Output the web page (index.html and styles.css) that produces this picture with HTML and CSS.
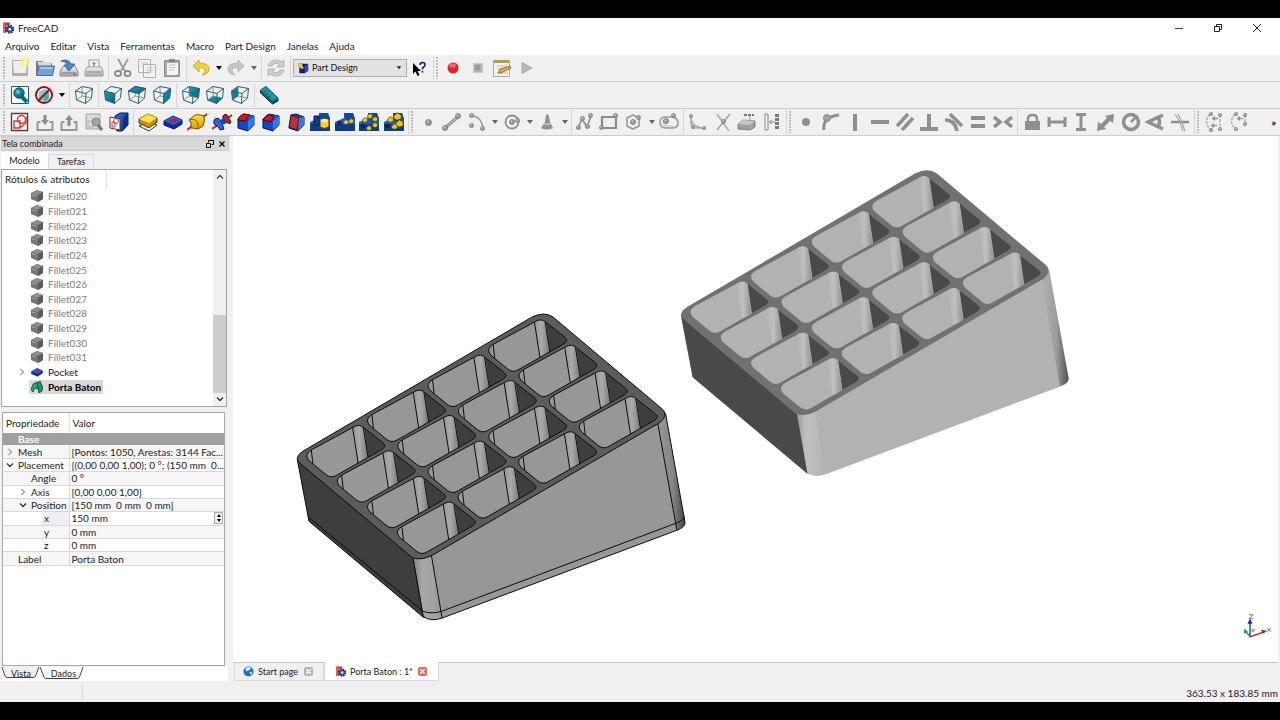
FILE: index.html
```html
<!DOCTYPE html>
<html lang="pt">
<head>
<meta charset="utf-8">
<title>FreeCAD</title>
<link rel="stylesheet" href="styles.css">
</head>
<body>
<svg class="sprite" aria-hidden="true">
  <defs>
    <linearGradient id="teal" x1="0" y1="0" x2="1" y2="1"><stop offset="0" stop-color="#16a3b5"/><stop offset="1" stop-color="#0a5f7c"/></linearGradient>
    <linearGradient id="gold" x1="0" y1="0" x2="0" y2="1"><stop offset="0" stop-color="#ffe13c"/><stop offset="1" stop-color="#d79a06"/></linearGradient>
    <linearGradient id="steel" x1="0" y1="0" x2="0" y2="1"><stop offset="0" stop-color="#f4f4f4"/><stop offset="1" stop-color="#a8a8a8"/></linearGradient>
    <linearGradient id="blueface" x1="0" y1="0" x2="1" y2="1"><stop offset="0" stop-color="#2b6fe0"/><stop offset="1" stop-color="#0a2f9c"/></linearGradient>
    <linearGradient id="roundv" x1="0" y1="0" x2="1" y2="0"><stop offset="0" stop-color="#000" stop-opacity=".1"/><stop offset=".3" stop-color="#fff" stop-opacity=".16"/><stop offset=".65" stop-color="#fff" stop-opacity=".12"/><stop offset="1" stop-color="#fff" stop-opacity="0"/></linearGradient>
    <linearGradient id="roundr" x1="0" y1="0" x2="1" y2="0"><stop offset="0" stop-color="#000" stop-opacity="0"/><stop offset=".55" stop-color="#000" stop-opacity=".12"/><stop offset="1" stop-color="#000" stop-opacity=".55"/></linearGradient>
    <linearGradient id="roundc" x1="0" y1="0" x2="1" y2="0"><stop offset="0" stop-color="#fff" stop-opacity="0"/><stop offset=".45" stop-color="#fff" stop-opacity=".18"/><stop offset="1" stop-color="#000" stop-opacity=".22"/></linearGradient>
    <clipPath id="opening"><path d="M66 449L190 382Q209 370 223 384L279 428Q292 438 277 448L142 525Q124 537 108 524L58 483Q40 463 66 449Z"/></clipPath>
  </defs>

  <symbol id="i-app" viewBox="0 0 20 20"><path d="M2 1h11v4H7v3h4v4H7v6H2z" fill="#d8301c"/><path d="M2 1h3v17H2z" fill="#f0634a"/><circle cx="13" cy="12" r="5" fill="none" stroke="#16327f" stroke-width="5" stroke-dasharray="2.6 1.3"/><circle cx="13" cy="12" r="4" fill="#dce6fa" stroke="#2145a2" stroke-width="3"/></symbol>
  <symbol id="i-new" viewBox="0 0 20 20"><path d="M2.500 2.500h15v15h-15z" fill="url(#steel)" stroke="#b0b0a0"/><path d="M4 4h12v11H4z" fill="#efefea"/><circle cx="15" cy="4" r="4.500" fill="#f8f05a" opacity=".75"/><circle cx="15" cy="4" r="2" fill="#fffde0"/></symbol>
  <symbol id="i-open" viewBox="0 0 20 20"><path d="M1 3h7l1 2h8v6H1z" fill="#8b8b8b"/><path d="M3 4h13v8H3z" fill="#d7d7d7"/><path d="M1 3v14h1l2-9z" fill="#777"/><path d="M4 8h15.500l-2 9.500H1.500z" fill="#74a0d4" stroke="#3f6fae"/><path d="M5 9h13l-.6 2H4.600z" fill="#a6c5e8"/></symbol>
  <symbol id="i-save" viewBox="0 0 20 20"><path d="M4 8h12l3 6v4H1v-4z" fill="url(#steel)" stroke="#8a8a8a"/><path d="M3 15h14M14 16.500h3" stroke="#777"/><path d="M2 3Q9 0 12 6h4l-6 7-5-6h3Q7 3 2 3z" fill="#4f86c6" stroke="#2a5a9a" stroke-width=".8"/></symbol>
  <symbol id="i-print" viewBox="0 0 20 20"><path d="M5 2h10v8H5z" fill="#f5f5f5" stroke="#9a9a9a"/><path d="M3 9h14l2 4v5H1v-5z" fill="url(#steel)" stroke="#9a9a9a"/><path d="M3 14h14" stroke="#888"/><path d="M9 8.500V6H7.500L10 3.500 12.500 6H11v2.500z" fill="#9a9a9a"/></symbol>
  <symbol id="i-cut" viewBox="0 0 20 20"><path d="M5 1l7 12M15 1L8 13" stroke="#9b9b9b" stroke-width="1.800" fill="none"/><ellipse cx="5" cy="15.500" rx="3" ry="2.700" fill="none" stroke="#868686" stroke-width="1.800"/><ellipse cx="14.500" cy="15.500" rx="3" ry="2.700" fill="none" stroke="#868686" stroke-width="1.800"/></symbol>
  <symbol id="i-copy" viewBox="0 0 20 20"><g fill="#f2f2f2" stroke="#b0b0b0"><path d="M1.500 1.500h12v13h-12zM6.500 6.500h12v13h-12z"/></g><path d="M4 5h7M4 8h3M9 10h7M9 12.500h7M9 15h5" stroke="#c6c6c6"/></symbol>
  <symbol id="i-paste" viewBox="0 0 20 20"><path d="M2.500 2.500h15v16h-15z" fill="#a9a9a9" stroke="#8d8d8d"/><path d="M5 5h11v11l-2 1H5z" fill="#f4f4f4"/><path d="M7 1h6v3H7z" fill="#888"/><path d="M7 7h7M7 9.500h7M7 12h5" stroke="#c2c2c2"/></symbol>
  <symbol id="i-undo" viewBox="0 0 20 20"><path d="M8 2L2 8l6 6v-4q6-1 6 3 0 2-3 4 7-1 7-6 0-6-10-6z" fill="#efd23a" stroke="#c4a018" stroke-width=".8"/></symbol>
  <symbol id="i-redo" viewBox="0 0 20 20"><path d="M12 2l6 6-6 6v-4q-6-1-6 3 0 2 3 4-7-1-7-6 0-6 10-6z" fill="#c6c6c6" stroke="#b0b0b0" stroke-width=".8"/></symbol>
  <symbol id="i-refresh" viewBox="0 0 20 20"><path d="M2 8Q4 2 10 2q4 0 5.500 2L18 2v7h-7l2.500-2.500Q9 3.500 6 8zM18 12q-2 6-8 6-4 0-5.500-2L2 18v-7h7l-2.500 2.500Q11 16.500 14 12z" fill="#cdcdcd" stroke="#a9a9a9" stroke-width=".8"/></symbol>
  <symbol id="i-part" viewBox="0 0 20 20"><path d="M3 5l5-3h10v12l-6 4H3z" fill="#101c9a" stroke="#000640"/><path d="M12 6l6-4v12l-6 4z" fill="#2a43d8"/><path d="M1 1h7v5l3 3-4 2-6-4z" fill="#f4d52a" stroke="#6b5a00" stroke-width=".6"/></symbol>
  <symbol id="i-what" viewBox="0 0 20 20"><path d="M4 5v11l2.500-2.500L8.500 18l2-1-2-4H12z" fill="#000"/><path d="M11 7q0-2.500 2.500-2.500T16 6.700q0 1.500-2.500 3.300v1.500M13.500 13v1.600" fill="none" stroke="#12127a" stroke-width="1.500"/></symbol>
  <symbol id="i-rec" viewBox="0 0 20 20"><circle cx="10" cy="10" r="5.500" fill="#e0252b"/><ellipse cx="9.500" cy="7.500" rx="3.500" ry="2" fill="#f26a6c"/></symbol>
  <symbol id="i-stop" viewBox="0 0 20 20"><path d="M5.500 5.500h9v9h-9z" fill="#b4b4b4" stroke="#c9c9c9"/><path d="M7 7h5v5H7z" fill="#9c9c9c"/></symbol>
  <symbol id="i-macro" viewBox="0 0 20 20"><path d="M1.500 2.500h16v16h-16z" fill="#f5f3ea" stroke="#aaa"/><path d="M2 2h15v3H2z" fill="#b4a04c"/><path d="M5 8h10M5 11h6M5 15h11" stroke="#bcbcbc"/><path d="M6 15l2-4L18 8l1 2-10 5z" fill="#e5a340" stroke="#865017" stroke-width=".7"/></symbol>
  <symbol id="i-play" viewBox="0 0 20 20"><path d="M5 4.500v11l10-5.500z" fill="#b8b8b8" stroke="#a8a8a8"/></symbol>
  <symbol id="i-drop" viewBox="0 0 8 5"><path d="M1 0h6L4 4z" fill="currentColor"/></symbol>

  <symbol id="i-fit" viewBox="0 0 20 20"><path d="M1.500 1.500h17v17h-17z" fill="#fff" stroke="#1b5e72"/><path d="M12 12l5 5" stroke="#0c6a80" stroke-width="4"/><circle cx="9" cy="8" r="5.200" fill="url(#teal)" stroke="#084e60"/><circle cx="8" cy="7" r="2" fill="#5fc6d2"/></symbol>
  <symbol id="i-draw" viewBox="0 0 20 20"><path d="M5 7l6-3 4 3v7l-5 3-5-2z" fill="#66d2d4"/><path d="M10 9l5-2v7l-5 3z" fill="#3db0b8"/><circle cx="10" cy="10" r="8" fill="none" stroke="#a80f12" stroke-width="2"/><path d="M16 4L4 16" stroke="#a80f12" stroke-width="2"/></symbol>
  <symbol id="wire" viewBox="0 0 20 20"><path d="M1.500 6L8 1.500l10.500 2L12 8.500zM1.500 6L2.500 15l9 3.500.5-10M11.500 18.500L17.500 13l1-9.500" fill="none" stroke="#2d5e68"/><path d="M8 1.500l.2 9.500 9.300 2M8.200 11L2.500 15" fill="none" stroke="#5c8790" stroke-width=".8"/></symbol>
  <symbol id="i-front" viewBox="0 0 20 20"><path d="M1.500 6L12 8.500l-.5 10-9-3.500z" fill="url(#teal)"/><path d="M1.500 6L8 1.500l10.500 2L12 8.500zM1.500 6L2.500 15l9 3.500.5-10M11.500 18.500L17.500 13l1-9.500" fill="none" stroke="#2d5e68"/></symbol>
  <symbol id="i-top" viewBox="0 0 20 20"><use href="#wire" width="20" height="20"/><path d="M1.500 6L8 1.500l10.500 2L12 8.500z" fill="url(#teal)" stroke="#2d5e68"/></symbol>
  <symbol id="i-right" viewBox="0 0 20 20"><use href="#wire" width="20" height="20"/><path d="M12 8.500l6.500-5-1 9.500-6 5.500z" fill="url(#teal)" stroke="#2d5e68"/></symbol>
  <symbol id="i-rear" viewBox="0 0 20 20"><path d="M8 1.500l10.500 2-1 9.500-9.300-2z" fill="url(#teal)"/><use href="#wire" width="20" height="20"/></symbol>
  <symbol id="i-bottom" viewBox="0 0 20 20"><path d="M8.200 11l9.300 2-6 5.500-9-3.500z" fill="url(#teal)"/><use href="#wire" width="20" height="20"/></symbol>
  <symbol id="i-left" viewBox="0 0 20 20"><path d="M1.500 6L8 1.500l.2 9.500-5.700 4z" fill="url(#teal)"/><use href="#wire" width="20" height="20"/></symbol>
  <symbol id="i-measure" viewBox="0 0 20 20"><path d="M1.500 5L7 1.500 19 13v3l-5.500 3L1.500 8z" fill="#0e5a68" stroke="#06343c"/><path d="M1.500 5L7 1.500 19 13l-5.500 3z" fill="#2593a0"/><path d="M4.500 7l2-1M7 9.500l2-1M9.500 12l2-1" stroke="#043038"/></symbol>

  <symbol id="i-sketch" viewBox="0 0 20 20"><path d="M1.500 1.500h16v17h-16z" fill="#fff" stroke="#5b3b3b" stroke-width="1.400"/><g fill="none" stroke="#d43a36" stroke-width="1.400"><circle cx="11.500" cy="7.500" r="4"/><path d="M4 9h6v7H4zM10 16l6-5v-6"/></g></symbol>
  <symbol id="i-import" viewBox="0 0 20 20"><path d="M2.500 10v8h15v-8h-3M2.500 10h3" fill="none" stroke="#979797" stroke-width="2"/><path d="M8.500 3h3v5H14l-4 5-4-5h2.500z" fill="#8c8c8c"/></symbol>
  <symbol id="i-export" viewBox="0 0 20 20"><path d="M2.500 10v8h15v-8h-3M2.500 10h3" fill="none" stroke="#979797" stroke-width="2"/><path d="M8.500 14h3V8H14l-4-5-4 5h2.500z" fill="#8c8c8c"/></symbol>
  <symbol id="i-viewsk" viewBox="0 0 20 20"><path d="M2 2h14v15H2z" fill="#dadada" stroke="#a3a3a3"/><path d="M4 9h5v6H4zM9 15l4-4V5" fill="none" stroke="#b0b0b0"/><path d="M14 13l4 5" stroke="#777" stroke-width="3"/><circle cx="12" cy="10" r="4" fill="#a5a5a5" stroke="#808080"/></symbol>
  <symbol id="i-mapsk" viewBox="0 0 20 20"><path d="M6 4l5-3h8v12l-6 6H8z" fill="url(#blueface)" stroke="#061c50"/><path d="M14 6l5-5v12l-5 6z" fill="#0a2c86"/><path d="M1 5l10 2v11L1 16z" fill="#fff" stroke="#7d2b2b"/><g fill="none" stroke="#d43a36"><circle cx="7" cy="9" r="2.400"/><path d="M3 10h3v5H3z"/></g></symbol>
  <symbol id="i-pad" viewBox="0 0 20 20"><path d="M1 14l9-4 9 3-8 6z" fill="#fff" stroke="#333"/><path d="M1 7l9-5 9 4v4l-8 6-10-5z" fill="#c58f08" stroke="#4d3900"/><path d="M1 7l9-5 9 4-8 5z" fill="#ffe04a"/></symbol>
  <symbol id="i-pocket" viewBox="0 0 20 20"><path d="M1 9l9-5 9 4v4l-8 5-10-4z" fill="#0d2f9c" stroke="#04144a"/><path d="M1 9l9-5 9 4-8 5z" fill="#2a60dc"/><path d="M6 9l4-2.500 5 1.800-4 2.700z" fill="#d5141c"/></symbol>
  <symbol id="i-rev" viewBox="0 0 20 20"><path d="M0 18L20 2" stroke="#e01c14" stroke-width="2"/><path d="M2 8l6-5q2-1 9 1 1 6-1 10l-5 3q-5-1-7-1Q5 10 2 8z" fill="url(#gold)" stroke="#6a4b00"/><path d="M2 8q7-2 9 3v6" fill="none" stroke="#8a6400"/></symbol>
  <symbol id="i-groove" viewBox="0 0 20 20"><path d="M0 17L20 3" stroke="#e01c14" stroke-width="2"/><path d="M2 8q4-4 7 1l3 8-4 1q-1-4-6-6z" fill="#2a64d8" stroke="#06205e"/><path d="M11 4q2-3 4-1l4 7q-1 3-3 1l-5-3z" fill="#c21e2a" stroke="#500"/><path d="M8 8l5-2 2 5-5 2z" fill="#1848b4"/></symbol>
  <symbol id="cube" viewBox="0 0 20 20"><path d="M2 7l6-5 10 2v9l-6 6-10-3z" fill="#1647c4" stroke="#05154e"/><path d="M12 9l6-5v9l-6 6z" fill="#2f7ae6"/><path d="M2 7l6-5 10 2-6 5z" fill="#1b58c8"/></symbol>
  <symbol id="i-fillet" viewBox="0 0 20 20"><use href="#cube" width="20" height="20"/><path d="M2 8q0-3 5-6l7 1q-4 2-4 6z" fill="#d8151e" stroke="#4c0008"/></symbol>
  <symbol id="i-chamfer" viewBox="0 0 20 20"><use href="#cube" width="20" height="20"/><path d="M2 8l4-5 7 1-3 6z" fill="#d8151e" stroke="#4c0008"/></symbol>
  <symbol id="i-draft" viewBox="0 0 20 20"><path d="M5 3l5-1 8 3v8l-6 6-9-3z" fill="#1648b8" stroke="#05154e"/><path d="M5 3l8 3-2 12-8-3z" fill="#b8303c" stroke="#560a14"/><path d="M13 6l5-1v8l-6 6z" fill="#2f7ae6"/></symbol>
  <symbol id="base" viewBox="0 0 20 20"><path d="M0 10l9-4V1l9 0 2 6v12H0z" fill="#1a5fb4"/><path d="M0 12h20v7H0z" fill="#0b3c86"/><path d="M9 1l9 0 2 6-8 4z" fill="#114a9c"/></symbol>
  <symbol id="yb" viewBox="0 0 6 6"><path d="M.5 2.500L3 .5l2.500 1.500v2.500L3 5.500.5 4.500z" fill="#e8c32a" stroke="#4a3a00" stroke-width=".6"/></symbol>
  <symbol id="i-mirror" viewBox="0 0 20 20"><use href="#base" width="20" height="20"/><path d="M4 4h5v9H4z" fill="#0c3e98" stroke="#041c50"/><path d="M10 9q4-4 9 0v6q-5 3-9 0z" fill="#f0d030" stroke="#4a3a00"/><ellipse cx="14.500" cy="8.500" rx="4" ry="1.800" fill="#fff07a"/></symbol>
  <symbol id="i-linear" viewBox="0 0 20 20"><use href="#base" width="20" height="20"/><use href="#yb" x="8" y="7" width="6" height="6"/><use href="#yb" x="13" y="6" width="6" height="6"/><path d="M2 9h5v4H2z" fill="#0a2f7c"/></symbol>
  <symbol id="i-polar" viewBox="0 0 20 20"><use href="#base" width="20" height="20"/><use href="#yb" x="8" y="1" width="6" height="6"/><use href="#yb" x="13" y="4" width="6" height="6"/><use href="#yb" x="13" y="10" width="6" height="6"/><use href="#yb" x="7" y="13" width="6" height="6"/><use href="#yb" x="3" y="5" width="6" height="6"/><path d="M2 12h4v4H2z" fill="#06225e"/></symbol>
  <symbol id="i-multi" viewBox="0 0 20 20"><use href="#base" width="20" height="20"/><use href="#yb" x="9" y="0" width="9" height="9"/><use href="#yb" x="11" y="7" width="9" height="9"/><use href="#yb" x="3" y="4" width="7" height="7"/><use href="#yb" x="7" y="11" width="7" height="7"/><path d="M1 12h5v4H1z" fill="#06225e"/></symbol>

  <symbol id="dot" viewBox="0 0 6 6"><circle cx="3" cy="3" r="2.500" fill="#9c9c9c" stroke="#747474" stroke-width=".8"/><circle cx="2.400" cy="2.200" r=".9" fill="#cfcfcf"/></symbol>
  <symbol id="i-point" viewBox="0 0 20 20"><use href="#dot" x="7" y="7" width="7" height="7"/></symbol>
  <symbol id="i-line" viewBox="0 0 20 20"><path d="M3 16L17 4" stroke="#8c8c8c" stroke-width="3"/><path d="M3 16L17 4" stroke="#d0d0d0"/><use href="#dot" x="0" y="13" width="6" height="6"/><use href="#dot" x="13" y="1" width="6" height="6"/></symbol>
  <symbol id="i-arc" viewBox="0 0 20 20"><path d="M5 4q9 0 11 12" fill="none" stroke="#999" stroke-width="1.500"/><use href="#dot" x="2" y="1" width="5" height="5"/><use href="#dot" x="2" y="11" width="5" height="5"/><use href="#dot" x="13" y="14" width="5" height="5"/></symbol>
  <symbol id="i-circle" viewBox="0 0 20 20"><circle cx="10" cy="10" r="6.500" fill="none" stroke="#909090" stroke-width="1.800"/><use href="#dot" x="7" y="7" width="6" height="6"/><use href="#dot" x="13" y="6" width="5" height="5"/></symbol>
  <symbol id="i-cone" viewBox="0 0 20 20"><path d="M9 3q2-2 3 1l1 6 3 6q-6 3-12 0l4-6z" fill="#929292"/><path d="M5 11q5 3 10 0" fill="none" stroke="#e4e4e4"/></symbol>
  <symbol id="i-poly" viewBox="0 0 20 20"><path d="M3 16l4-9 5 8 4-11" fill="none" stroke="#949494" stroke-width="1.800"/><use href="#dot" x="1" y="13" width="5" height="5"/><use href="#dot" x="5" y="4" width="5" height="5"/><use href="#dot" x="10" y="12" width="5" height="5"/><use href="#dot" x="13" y="1" width="5" height="5"/></symbol>
  <symbol id="i-rect" viewBox="0 0 20 20"><path d="M3 5h14v11H3z" fill="none" stroke="#8c8c8c" stroke-width="2.200"/><use href="#dot" x="0" y="13" width="5" height="5"/><use href="#dot" x="14" y="1" width="5" height="5"/></symbol>
  <symbol id="i-hex" viewBox="0 0 20 20"><path d="M9 3l6 3v8l-6 3-6-3V6z" fill="none" stroke="#999" stroke-width="1.600"/><use href="#dot" x="6" y="7" width="6" height="6"/><use href="#dot" x="12" y="3" width="5" height="5"/></symbol>
  <symbol id="i-slot" viewBox="0 0 20 20"><path d="M7 5h6q6 1 6 6 0 5-6 5H7q-6 0-6-6 0-5 6-5z" fill="none" stroke="#999" stroke-width="1.600"/><path d="M7 7q-3 0-3 3 0 4 4 4h6" fill="none" stroke="#bbb"/><use href="#dot" x="4" y="6" width="6" height="6"/><use href="#dot" x="12" y="1" width="5" height="5"/></symbol>
  <symbol id="i-sfillet" viewBox="0 0 20 20"><path d="M3 3v9q1 4 5 4h9M3 5q0 10 13 11" fill="none" stroke="#aaa" stroke-width="1.500"/><use href="#dot" x="1" y="2" width="4" height="4"/><use href="#dot" x="3" y="13" width="4" height="4"/><use href="#dot" x="14" y="14" width="4" height="4"/></symbol>
  <symbol id="i-trim" viewBox="0 0 20 20"><path d="M4 2l12 17M17 2L4 18" stroke="#a2a2a2" stroke-width="1.500"/><path d="M4 2l12 17" stroke="#c9c9c9" stroke-width=".6"/><use href="#dot" x="8" y="7" width="5" height="5"/></symbol>
  <symbol id="i-ext" viewBox="0 0 20 20"><path d="M1 12l5-4 12 1v6l-5 3-12-1z" fill="#a0a0a0" stroke="#808080"/><path d="M1 12l5-4 12 1-5 4z" fill="#c6c6c6"/><path d="M7 3h10" stroke="#777" stroke-width="2" stroke-dasharray="3 1"/><path d="M13 4v4" stroke="#999"/></symbol>
  <symbol id="i-carbon" viewBox="0 0 20 20"><path d="M3 2h3v16H3z" fill="#f4f4f4" stroke="#888"/><path d="M15 2v16" stroke="#7b7b7b" stroke-width="4" stroke-dasharray="3 1"/><path d="M7 10h6M9 8v4" stroke="#888"/></symbol>

  <symbol id="i-c1" viewBox="0 0 20 20"><circle cx="10" cy="10" r="4" fill="#8f8f8f"/></symbol>
  <symbol id="i-c2" viewBox="0 0 20 20"><path d="M3 18Q1 5 18 3" fill="none" stroke="#8f8f8f" stroke-width="3"/><circle cx="6" cy="6" r="3.500" fill="#a4a4a4" stroke="#868686"/></symbol>
  <symbol id="i-c3" viewBox="0 0 20 20"><path d="M10 2v17" stroke="#8f8f8f" stroke-width="4"/></symbol>
  <symbol id="i-c4" viewBox="0 0 20 20"><path d="M1 10h18" stroke="#8f8f8f" stroke-width="4"/></symbol>
  <symbol id="i-c5" viewBox="0 0 20 20"><path d="M2 14L13 2M7 18L18 6" stroke="#8f8f8f" stroke-width="3.500"/></symbol>
  <symbol id="i-c6" viewBox="0 0 20 20"><path d="M10 2v15M1 17h18" stroke="#8f8f8f" stroke-width="4"/></symbol>
  <symbol id="i-c7" viewBox="0 0 20 20"><path d="M6 2l12 12M1 8q10 0 12 11" fill="none" stroke="#8f8f8f" stroke-width="3.500"/></symbol>
  <symbol id="i-c8" viewBox="0 0 20 20"><path d="M3 6h14M3 14h14" stroke="#8f8f8f" stroke-width="4"/></symbol>
  <symbol id="i-c9" viewBox="0 0 20 20"><path d="M1 5l6 5-6 5M19 5l-6 5 6 5" fill="none" stroke="#8f8f8f" stroke-width="3.500"/></symbol>
  <symbol id="i-lock" viewBox="0 0 20 20"><path d="M3 9h15v9H3z" fill="#8f8f8f"/><path d="M6 10V7q0-4 4.500-4T15 7v3" fill="none" stroke="#8f8f8f" stroke-width="2.500"/></symbol>
  <symbol id="i-hd" viewBox="0 0 20 20"><path d="M2 5v10M18 5v10M2 10h16" stroke="#8f8f8f" stroke-width="3"/></symbol>
  <symbol id="i-vd" viewBox="0 0 20 20"><path d="M5 2.500h10M5 17.500h10M10 2v16" stroke="#8f8f8f" stroke-width="3"/></symbol>
  <symbol id="i-len" viewBox="0 0 20 20"><path d="M1 19l1-9 3 2 6-6-2-2 9-2-1 9-3-2-6 6 2 2z" fill="#8f8f8f"/></symbol>
  <symbol id="i-rad" viewBox="0 0 20 20"><circle cx="10" cy="10" r="7.500" fill="none" stroke="#8f8f8f" stroke-width="3.500"/><path d="M10 10l5-5" stroke="#8f8f8f" stroke-width="2.500"/></symbol>
  <symbol id="i-ang" viewBox="0 0 20 20"><path d="M18 3L3 10l15 7M13 5q3 5 0 10" fill="none" stroke="#8f8f8f" stroke-width="3.500"/></symbol>
  <symbol id="i-snell" viewBox="0 0 20 20"><path d="M1 10h18" stroke="#8f8f8f" stroke-width="2.500"/><path d="M5 2l5 8 3 9M8 2l4 8 3 9" fill="none" stroke="#a8a8a8" stroke-width="1.200"/></symbol>
  <symbol id="i-sel" viewBox="0 0 20 20"><path d="M6 2Q-1 10 6 17M16 3v13" fill="none" stroke="#a8a8a8" stroke-width="1.300" stroke-dasharray="3 1"/><path d="M14 6.500H9M13 13.500H8" stroke="#909090" stroke-width="1.300"/><path d="M11 4L7.500 6.500 11 9zM10 11l-3.500 2.500L10 16z" fill="#909090"/><use href="#dot" x="5" y="0" width="4" height="4"/><use href="#dot" x="14" y="1" width="4" height="4"/><use href="#dot" x="14" y="15" width="4" height="4"/><use href="#dot" x="5" y="16" width="4" height="4"/></symbol>
  <symbol id="i-sel2" viewBox="0 0 20 20"><path d="M6 2Q-1 10 6 16M16 3v9" fill="none" stroke="#a8a8a8" stroke-width="1.300" stroke-dasharray="3 1"/><path d="M14 6.500H9" stroke="#909090" stroke-width="1.300"/><path d="M11 4L7.500 6.500 11 9z" fill="#909090"/><use href="#dot" x="5" y="0" width="4" height="4"/><use href="#dot" x="14" y="1" width="4" height="4"/><use href="#dot" x="14" y="10" width="4" height="4"/><use href="#dot" x="5" y="15" width="4" height="4"/></symbol>

  <symbol id="i-gray" viewBox="0 0 12 12"><path d="M0 3l6-3 6 2v7l-5 3-7-3z" fill="#747474"/><path d="M0 3l6-3 6 2-5 3z" fill="#8d8d8d"/><path d="M1 5l4 1" stroke="#aaa"/><path d="M7 5l5-3v7l-5 3z" fill="#5c5c5c"/></symbol>
  <symbol id="i-mesh" viewBox="0 0 12 12"><path d="M0 9l2-6 4-2 1 7-3-1-2 4z" fill="#27a95c" stroke="#0b5030" stroke-width=".8"/><path d="M6 2l3-2 3 7-1 3-3 2z" fill="#1d8f72" stroke="#0b4038" stroke-width=".8"/></symbol>
  <symbol id="i-close" viewBox="0 0 10 10"><path d="M2.500 2.500l5 5M7.500 2.500l-5 5" stroke="currentColor" stroke-width="1.300"/></symbol>
  <symbol id="i-float" viewBox="0 0 10 10"><path d="M3.500 3.500v-2h5v4h-2M1.500 4.500h4v4h-4z" fill="none" stroke="#000"/></symbol>
  <symbol id="i-rt" viewBox="0 0 8 8"><path d="M2.500 1l3 3-3 3" fill="none" stroke="#999" stroke-width="1.200"/></symbol>
  <symbol id="i-dn" viewBox="0 0 8 8"><path d="M1 2.500l3 3 3-3" fill="none" stroke="#333" stroke-width="1.300"/></symbol>
  <symbol id="i-up" viewBox="0 0 8 8"><path d="M1 5.500l3-3 3 3" fill="none" stroke="#444" stroke-width="1.300"/></symbol>
  <symbol id="i-globe" viewBox="0 0 12 12"><circle cx="6" cy="6" r="5.500" fill="#1f6fc4"/><path d="M3 2q5-2 6 1l-3 2-3 1zM7 7l3-1-1 4z" fill="#d8ecfc"/></symbol>

  <symbol id="cell" overflow="visible">
    <g clip-path="url(#opening)">
      <path class="m-light" d="M40 360h260v180H40z"/>
      <path class="m-dark" d="M219 360h90v180h-64z"/>
      <path class="m-light" d="M187 370h31l17 115h-30z"/>
      <path d="M187 370h31l17 115h-30z" fill="url(#roundc)"/>
      <path class="m-line" d="M187 375l18 115M219 375l16 100M63 440l6 52"/>
    </g>
    <path class="m-line" d="M66 449L190 382Q209 370 223 384L279 428Q292 438 277 448L142 525Q124 537 108 524L58 483Q40 463 66 449Z"/>
  </symbol>
  <symbol id="cells" overflow="visible">
    <use href="#cell"/><use href="#cell" x="182" y="-106"/><use href="#cell" x="364" y="-211"/><use href="#cell" x="546" y="-317"/>
  </symbol>
  <symbol id="tray" overflow="visible">
    <path class="m-dark m-line" d="M22 478L57 664 400 952 440 955 420 740z"/>
    <path class="m-light" d="M370 770L402 952Q424 967 457 955L1160 692Q1190 682 1186 665L1128 340z"/>
    <path d="M370 770L402 952Q424 967 457 955L425 768z" fill="url(#roundv)"/>
    <path d="M1105 372L1160 690Q1190 682 1186 665L1128 340z" fill="url(#roundr)"/>
    <path class="m-line" d="M370 776L400 950Q424 967 457 955L1160 692Q1190 682 1186 665L1128 340M425 768L457 955M1105 372L1162 691M55 652L400 935Q428 944 457 934L1165 668Q1184 660 1185 650"/>
    <path class="m-top m-line" d="M22 476Q22 462 52 446L725 52Q763 33 789 50L1118 327Q1137 345 1112 367L428 766Q396 783 368 774L30 490Q22 484 22 476Z"/>
    <use href="#cells"/><use href="#cells" x="91" y="76"/><use href="#cells" x="182" y="153"/><use href="#cells" x="272" y="230"/>
  </symbol>
</svg>

<div class="window">
  <header class="titlebar">
    <svg class="app-icon"><use href="#i-app"/></svg><span class="title">FreeCAD</span>
    <div class="win-buttons">
      <button aria-label="Minimizar"><svg viewBox="0 0 10 10"><path d="M1 5.500h8" stroke="#444"/></svg></button>
      <button aria-label="Restaurar"><svg viewBox="0 0 10 10"><path d="M1.500 3.500h5v5h-5zM3.500 3V1.500h5v5H7" fill="none" stroke="#222"/></svg></button>
      <button aria-label="Fechar"><svg viewBox="0 0 10 10"><path d="M1 1l8 8M9 1L1 9" stroke="#222"/></svg></button>
    </div>
  </header>
  <nav class="menubar">
    <button>Arquivo</button><button>Editar</button><button>Vista</button><button>Ferramentas</button><button>Macro</button><button>Part Design</button><button>Janelas</button><button>Ajuda</button>
  </nav>

  <div class="toolbar">
    <i class="grip"></i>
    <div class="group g4"><button aria-label="Novo"><svg><use href="#i-new"/></svg></button><button aria-label="Abrir"><svg><use href="#i-open"/></svg></button><button aria-label="Salvar"><svg><use href="#i-save"/></svg></button><button aria-label="Imprimir"><svg><use href="#i-print"/></svg></button></div>
    <i class="sep"></i>
    <div class="group g3"><button aria-label="Cortar"><svg><use href="#i-cut"/></svg></button><button aria-label="Copiar"><svg><use href="#i-copy"/></svg></button><button aria-label="Colar"><svg><use href="#i-paste"/></svg></button></div>
    <i class="sep"></i>
    <div class="group"><button aria-label="Desfazer"><svg><use href="#i-undo"/></svg></button><button class="drop" aria-label="Lista desfazer"><svg><use href="#i-drop"/></svg></button><button aria-label="Refazer"><svg><use href="#i-redo"/></svg></button><button class="drop dim" aria-label="Lista refazer"><svg><use href="#i-drop"/></svg></button></div>
    <i class="sep"></i>
    <div class="group"><button aria-label="Atualizar"><svg><use href="#i-refresh"/></svg></button></div>
    <i class="sep"></i>
    <label class="workbench"><svg class="wb-icon"><use href="#i-part"/></svg><select aria-label="Bancada"><option>Part Design</option></select><svg class="wb-arrow"><use href="#i-drop"/></svg></label>
    <div class="group"><button aria-label="O que é isto?"><svg><use href="#i-what"/></svg></button></div>
    <i class="sep"></i><i class="grip"></i>
    <div class="group g4"><button aria-label="Gravar macro"><svg><use href="#i-rec"/></svg></button><button aria-label="Parar macro"><svg><use href="#i-stop"/></svg></button><button aria-label="Macros"><svg><use href="#i-macro"/></svg></button><button aria-label="Executar macro"><svg><use href="#i-play"/></svg></button></div>
  </div>

  <div class="toolbar">
    <i class="grip"></i>
    <div class="group"><button aria-label="Ajustar tudo"><svg><use href="#i-fit"/></svg></button><button aria-label="Estilo de desenho"><svg><use href="#i-draw"/></svg></button><button class="drop" aria-label="Lista de estilos"><svg><use href="#i-drop"/></svg></button></div>
    <i class="sep"></i>
    <div class="group"><button aria-label="Axonométrica"><svg><use href="#wire"/></svg></button></div>
    <i class="sep"></i>
    <div class="group g3"><button aria-label="Frente"><svg><use href="#i-front"/></svg></button><button aria-label="Topo"><svg><use href="#i-top"/></svg></button><button aria-label="Direita"><svg><use href="#i-right"/></svg></button></div>
    <i class="sep"></i>
    <div class="group g3"><button aria-label="Traseira"><svg><use href="#i-rear"/></svg></button><button aria-label="Inferior"><svg><use href="#i-bottom"/></svg></button><button aria-label="Esquerda"><svg><use href="#i-left"/></svg></button></div>
    <i class="sep"></i>
    <div class="group"><button aria-label="Medir distância"><svg><use href="#i-measure"/></svg></button></div>
  </div>

  <div class="toolbar">
    <i class="grip"></i>
    <div class="group g5"><button aria-label="Esboço"><svg><use href="#i-sketch"/></svg></button><button aria-label="Editar esboço"><svg><use href="#i-import"/></svg></button><button aria-label="Sair do esboço"><svg><use href="#i-export"/></svg></button><button aria-label="Ver esboço"><svg><use href="#i-viewsk"/></svg></button><button aria-label="Mapear esboço"><svg><use href="#i-mapsk"/></svg></button></div>
    <i class="sep"></i>
    <div class="group g11"><button aria-label="Pad"><svg><use href="#i-pad"/></svg></button><button aria-label="Pocket"><svg><use href="#i-pocket"/></svg></button><button aria-label="Revolução"><svg><use href="#i-rev"/></svg></button><button aria-label="Sulco"><svg><use href="#i-groove"/></svg></button><button aria-label="Fillet"><svg><use href="#i-fillet"/></svg></button><button aria-label="Chanfro"><svg><use href="#i-chamfer"/></svg></button><button aria-label="Inclinação"><svg><use href="#i-draft"/></svg></button><button aria-label="Espelhar"><svg><use href="#i-mirror"/></svg></button><button aria-label="Padrão linear"><svg><use href="#i-linear"/></svg></button><button aria-label="Padrão polar"><svg><use href="#i-polar"/></svg></button><button aria-label="Multitransformação"><svg><use href="#i-multi"/></svg></button></div>
    <i class="sep"></i><i class="grip"></i>
    <div class="group g3"><button aria-label="Ponto"><svg><use href="#i-point"/></svg></button><button aria-label="Linha"><svg><use href="#i-line"/></svg></button><button aria-label="Arco"><svg><use href="#i-arc"/></svg></button></div>
    <div class="group"><button class="drop dim" aria-label="Lista de arcos"><svg><use href="#i-drop"/></svg></button><button aria-label="Círculo"><svg><use href="#i-circle"/></svg></button><button class="drop dim" aria-label="Lista de círculos"><svg><use href="#i-drop"/></svg></button><button aria-label="Cônica"><svg><use href="#i-cone"/></svg></button><button class="drop dim" aria-label="Lista de cônicas"><svg><use href="#i-drop"/></svg></button></div>
    <i class="sep tight"></i>
    <div class="group g3"><button aria-label="Polilinha"><svg><use href="#i-poly"/></svg></button><button aria-label="Retângulo"><svg><use href="#i-rect"/></svg></button><button aria-label="Hexágono"><svg><use href="#i-hex"/></svg></button></div>
    <div class="group"><button class="drop dim" aria-label="Lista de polígonos"><svg><use href="#i-drop"/></svg></button><button aria-label="Ranhura"><svg><use href="#i-slot"/></svg></button></div>
    <i class="sep"></i>
    <div class="group g4"><button aria-label="Filete de esboço"><svg><use href="#i-sfillet"/></svg></button><button aria-label="Aparar"><svg><use href="#i-trim"/></svg></button><button aria-label="Geometria externa"><svg><use href="#i-ext"/></svg></button><button aria-label="Construção"><svg><use href="#i-carbon"/></svg></button></div>
    <i class="sep"></i><i class="grip"></i>
    <div class="group g9"><button aria-label="Coincidente"><svg><use href="#i-c1"/></svg></button><button aria-label="Ponto no objeto"><svg><use href="#i-c2"/></svg></button><button aria-label="Vertical"><svg><use href="#i-c3"/></svg></button><button aria-label="Horizontal"><svg><use href="#i-c4"/></svg></button><button aria-label="Paralelo"><svg><use href="#i-c5"/></svg></button><button aria-label="Perpendicular"><svg><use href="#i-c6"/></svg></button><button aria-label="Tangente"><svg><use href="#i-c7"/></svg></button><button aria-label="Igual"><svg><use href="#i-c8"/></svg></button><button aria-label="Simétrico"><svg><use href="#i-c9"/></svg></button></div>
    <i class="sep"></i>
    <div class="group g7"><button aria-label="Bloquear"><svg><use href="#i-lock"/></svg></button><button aria-label="Distância horizontal"><svg><use href="#i-hd"/></svg></button><button aria-label="Distância vertical"><svg><use href="#i-vd"/></svg></button><button aria-label="Comprimento"><svg><use href="#i-len"/></svg></button><button aria-label="Raio"><svg><use href="#i-rad"/></svg></button><button aria-label="Ângulo"><svg><use href="#i-ang"/></svg></button><button aria-label="Lei de Snell"><svg><use href="#i-snell"/></svg></button></div>
    <i class="sep"></i><i class="grip"></i>
    <div class="group g2"><button aria-label="Fechar forma"><svg><use href="#i-sel"/></svg></button><button aria-label="Conectar arestas"><svg><use href="#i-sel2"/></svg></button></div>
    <button class="more">»</button>
  </div>

  <main class="main">
    <aside class="dock">
      <div class="dock-title"><span>Tela combinada</span><button aria-label="Flutuar"><svg><use href="#i-float"/></svg></button><button aria-label="Fechar painel"><svg><use href="#i-close"/></svg></button></div>
      <div class="tabs" role="tablist"><button role="tab" class="tab active" aria-selected="true">Modelo</button><button role="tab" class="tab">Tarefas</button></div>
      <section class="tree">
        <div class="tree-content">
          <div class="tree-head">Rótulos &amp; atributos</div>
          <ul class="tree-list">
            <li><svg><use href="#i-gray"/></svg><span>Fillet020</span></li>
            <li><svg><use href="#i-gray"/></svg><span>Fillet021</span></li>
            <li><svg><use href="#i-gray"/></svg><span>Fillet022</span></li>
            <li><svg><use href="#i-gray"/></svg><span>Fillet023</span></li>
            <li><svg><use href="#i-gray"/></svg><span>Fillet024</span></li>
            <li><svg><use href="#i-gray"/></svg><span>Fillet025</span></li>
            <li><svg><use href="#i-gray"/></svg><span>Fillet026</span></li>
            <li><svg><use href="#i-gray"/></svg><span>Fillet027</span></li>
            <li><svg><use href="#i-gray"/></svg><span>Fillet028</span></li>
            <li><svg><use href="#i-gray"/></svg><span>Fillet029</span></li>
            <li><svg><use href="#i-gray"/></svg><span>Fillet030</span></li>
            <li><svg><use href="#i-gray"/></svg><span>Fillet031</span></li>
            <li class="live parent"><svg class="chev"><use href="#i-rt"/></svg><svg><use href="#i-pocket"/></svg><span>Pocket</span></li>
            <li class="live selected"><div class="hit"><svg><use href="#i-mesh"/></svg><span>Porta Baton</span></div></li>
          </ul>
        </div>
        <div class="scroll"><svg><use href="#i-up"/></svg><div class="track"><div class="thumb"></div></div><svg><use href="#i-dn"/></svg></div>
      </section>
      <section class="props">
        <table>
          <colgroup><col class="c-name"><col></colgroup>
          <thead><tr><th>Propriedade</th><th>Valor</th></tr></thead>
          <tbody>
            <tr class="cat"><td colspan="2">Base</td></tr>
            <tr class="alt"><td><svg><use href="#i-rt"/></svg>Mesh</td><td>[Pontos: 1050, Arestas: 3144 Fac...</td></tr>
            <tr><td><svg><use href="#i-dn"/></svg>Placement</td><td>[(0,00 0,00 1,00); 0 °; (150 mm&nbsp; 0...</td></tr>
            <tr class="alt l2"><td>Angle</td><td>0 °</td></tr>
            <tr class="l2"><td><svg><use href="#i-rt"/></svg>Axis</td><td>[0,00 0,00 1,00]</td></tr>
            <tr class="alt l2"><td><svg><use href="#i-dn"/></svg>Position</td><td>[150 mm&nbsp; 0 mm&nbsp; 0 mm]</td></tr>
            <tr class="l3 current"><td>x</td><td><div class="spin"><input type="text" aria-label="x" value="150 mm"><span class="steps"><button aria-label="Aumentar"></button><button aria-label="Diminuir"></button></span></div></td></tr>
            <tr class="alt l3"><td>y</td><td>0 mm</td></tr>
            <tr class="l3"><td>z</td><td>0 mm</td></tr>
            <tr class="alt"><td>Label</td><td>Porta Baton</td></tr>
          </tbody>
        </table>
      </section>
      <div class="slant-tabs" role="tablist">
        <svg class="slants" viewBox="0 0 84 14" aria-hidden="true"><path d="M1 0l4 10.500h28L38 0z" fill="#f0f0f0"/><path d="M1 0l3 9q.5 1.500 2 1.500h26q2 0 2.500-1.500L38 0M39 0l4 10q.5 1.500 2 1.500h31q2 0 2.500-1.500L82 0" fill="none" stroke="#444"/></svg>
        <button role="tab">Vista</button><button role="tab" aria-selected="true">Dados</button>
      </div>
    </aside>
    <section class="workspace">
      <div class="view3d">
        <svg viewBox="0 0 1046 526" role="img" aria-label="Vista 3D">
          <g class="solid" transform="translate(57 164) scale(.3333)"><use href="#tray"/></g>
          <g class="mesh" transform="translate(441 20) scale(.3333)"><use href="#tray"/></g>
          <g fill="none" stroke-width="1.300"><path d="M1018 501V487" stroke="#1226b0"/><path d="M1018 483l-2.500 5h5z" fill="#1226b0"/><path d="M1018 501l14-5" stroke="#b02020"/><path d="M1035 495l-6-1 2 4z" fill="#b02020"/><path d="M1018 501l-4-5" stroke="#1a9a40"/><path d="M1012 493v5l4-2z" fill="#1a9a40"/><path d="M1017 479h4l-4 4h4M1035 492l4 4M1039 492l-4 4M1020 493l1 3 2-3" stroke="#555" stroke-width=".8"/></g>
        </svg>
      </div>
      <div class="doc-tabs">
        <div class="doc"><button><svg><use href="#i-globe"/></svg>Start page</button><button class="x" aria-label="Fechar Start page"><svg><use href="#i-close"/></svg></button></div>
        <div class="doc open"><button><svg><use href="#i-app"/></svg>Porta Baton : 1*</button><button class="x" aria-label="Fechar Porta Baton"><svg><use href="#i-close"/></svg></button></div>
      </div>
    </section>
  </main>
  <footer class="status"><span class="msg"></span><span>363.53 x 183.85 mm</span></footer>
</div>
</body>
</html>
```
FILE: styles.css
```css
* { box-sizing: border-box; }
body {
  margin: 0;
  background: #000;
  color: #222;
  font-family: Lato, "Noto Sans", sans-serif;
  font-size: 10px;
  line-height: 14px;
}
button {
  border: 0;
  padding: 0;
  background: none;
  color: inherit;
  font: inherit;
}
svg { display: block; }
.sprite { position: absolute; width: 0; height: 0; }

.window {
  display: flex;
  flex-direction: column;
  height: 100vh;
  border: solid #000;
  border-width: 18px 0;
  background: #f0f0f0;
}

.titlebar {
  display: flex;
  align-items: center;
  height: 19px;
  padding-left: 2px;
  background: #fff;
}
.app-icon { width: 12px; height: 12px; margin-right: 4px; }
.win-buttons { display: flex; margin-left: auto; padding-right: 4px; }
.win-buttons button { display: grid; place-items: center; width: 39px; height: 19px; }
.win-buttons svg { width: 10px; height: 10px; }

.menubar {
  display: flex;
  gap: 11px;
  height: 18px;
  padding-left: 5px;
  background: #fff;
  line-height: 17px;
}

.toolbar {
  display: flex;
  flex: none;
  align-items: center;
  height: 27px;
  padding-left: 3px;
  border-bottom: 1px solid #cdcdcd;
  background: #f0f0f0;
}
.grip {
  flex: none;
  width: 5px;
  height: 22px;
  background: radial-gradient(circle at 1px 1px, #bdbdbd 1px, transparent 1px) 0 0 / 5px 3px;
}
.sep { flex: none; width: 5px; height: 24px; background: linear-gradient(#d6d6d6, #d6d6d6) center / 1px 100% no-repeat; }
.sep.tight { width: 3px; }
.group { display: flex; flex: none; }
.group button { display: grid; flex: 1 0 24px; place-items: center; height: 24px; }
.group button svg { width: 20px; height: 20px; }
.group .drop { flex: none; width: 11px; color: #000; }
.group .drop svg { width: 8px; height: 5px; }
.group .dim { color: #666; }
.g2 { width: 49px; }
.g3 { width: 73px; }
.g4 { width: 98px; }
.g5 { width: 123px; }
.g7 { width: 172px; }
.g9 { width: 221px; }
.g11 { width: 270px; }
.more { margin-left: auto; padding-right: 4px; font-weight: 700; color: #000; }

.workbench {
  display: flex;
  align-items: center;
  width: 114px;
  height: 18px;
  padding: 0 4px;
  border: 1px solid #adadad;
  background: #e2e2e2;
}
.wb-icon { width: 11px; height: 11px; }
.workbench select {
  flex: 1;
  min-width: 0;
  padding: 0 0 0 3px;
  border: 0;
  appearance: none;
  background: none;
  color: #111;
  font: inherit;
  font-size: 9px;
}
.wb-arrow { width: 6px; height: 4px; }

.main { display: flex; flex: 1; min-height: 0; }
.dock {
  display: flex;
  flex-direction: column;
  width: 230px;
  padding: 0 1px;
}
.dock-title {
  display: flex;
  align-items: center;
  gap: 2px;
  height: 15px;
  padding: 0 1px 0 0;
  border: 1px solid #c9c9c9;
  background: #d7d7d7;
  font-size: 9px;
}
.dock-title span { margin-right: auto; }
.dock-title svg { width: 10px; height: 10px; color: #000; }

.tabs { display: flex; align-items: flex-end; height: 18px; font-size: 9px; }
.tab {
  width: 46px;
  height: 15px;
  border: 1px solid #d9d9d9;
  border-bottom: 0;
  background: #f0f0f0;
}
.tab.active { width: 47px; height: 17px; border-color: #fff; background: #fff; }

.tree {
  display: flex;
  height: 238px;
  margin-right: 2px;
  border: 1px solid #a5a5a5;
  background: #fff;
}
.tree-content { flex: 1; }
.tree-head {
  width: 105px;
  height: 19px;
  padding-left: 3px;
  border-right: 1px solid #e3e3e3;
  line-height: 19px;
}
.tree-list {
  display: grid;
  grid-auto-rows: 1fr;
  height: 205px;
  margin: 0;
  padding: 0;
  list-style: none;
  color: #808080;
}
.tree-list li { display: flex; align-items: center; padding-left: 29px; }
.tree-list svg { width: 12px; height: 12px; margin-right: 5px; }
.tree-list .live { color: #222; }
.tree-list .parent { padding-left: 16px; }
.tree-list .chev { width: 8px; height: 8px; margin-right: 5px; }
.tree-list .selected { padding-left: 27px; color: #000; font-weight: 700; }
.hit { display: flex; align-items: center; padding: 0 2px; background: #d9d9d9; }
.scroll {
  display: flex;
  flex-direction: column;
  align-items: center;
  width: 13px;
  padding: 3px 0;
  background: #f0f0f0;
}
.scroll svg { width: 8px; height: 8px; }
.track { display: flex; flex: 1; align-self: stretch; margin: 2px 0; }
.thumb { align-self: flex-end; width: 100%; height: 37%; background: #cdcdcd; }

.props {
  flex: 1;
  min-height: 0;
  margin: 5px 4px 0 1px;
  border: 1px solid #a9a9a9;
  background: #fff;
}
.props table {
  width: 100%;
  height: 153px;
  border-collapse: collapse;
  table-layout: fixed;
}
.c-name { width: 66px; }
.props th {
  height: 20px;
  padding: 0 0 0 3px;
  border-right: 1px solid #ddd;
  font-weight: 400;
  text-align: left;
}
.props td {
  padding: 0 0 0 2px;
  border: solid #d8d8d8;
  border-width: 0 1px 1px 0;
  line-height: 12px;
  white-space: nowrap;
}
.props td:first-child { padding-left: 15px; }
.props .l2 td:first-child { padding-left: 28px; }
.props .l3 td:first-child { padding-left: 41px; }
.props td:last-child, .props th:last-child { border-right: 0; }
.props td > svg { float: left; width: 8px; height: 8px; margin: 2px 4px 0 -12px; }
.props .alt { background: #f6f6f6; }
.props .cat td { border: 0; background: #a0a0a0; color: #fff; font-weight: 700; }
.props .current td:first-child { background: linear-gradient(90deg, #fff 39px, #efeff3 39px); }
.spin { display: flex; height: 12px; padding-right: 1px; }
.spin input {
  flex: 1;
  min-width: 0;
  padding: 0;
  border: 0;
  background: none;
  color: inherit;
  font: inherit;
  line-height: 12px;
}
.steps { display: grid; width: 9px; border: 1px solid #aaa; background: #eee; }
.steps button { display: grid; place-items: center; }
.steps button::before { content: ""; border: solid transparent; border-width: 0 2px 3px; border-bottom-color: #000; }
.steps button:last-child::before { border-width: 3px 2px 0; border-top-color: #000; }

.slant-tabs {
  display: flex;
  position: relative;
  gap: 20px;
  height: 14px;
  margin: 1px 1px 1px 0;
  padding-left: 10px;
  background: #fff;
  font-size: 9px;
  line-height: 12px;
}
.slants { position: absolute; left: 0; top: 0; width: 84px; height: 14px; }
.slant-tabs button { position: relative; }

.workspace {
  display: flex;
  flex: 1;
  flex-direction: column;
  min-width: 0;
  padding: 0 2px 0 3px;
}
.view3d { flex: 1; min-height: 0; background: #fff; }
.view3d svg { width: 100%; height: 100%; }
.doc-tabs {
  display: flex;
  align-items: flex-start;
  height: 20px;
  padding-left: 1px;
  border-top: 1px solid #c6c6c6;
  font-size: 9px;
}
.doc {
  display: flex;
  align-items: center;
  justify-content: space-between;
  width: 90px;
  height: 18px;
  padding: 0 10px 0 8px;
  border: solid #d9d9d9;
  border-width: 0 1px 1px;
}
.doc.open { width: 115px; height: 19px; margin-top: -1px; padding: 1px 11px 0 10px; background: #fff; }
.doc button { display: flex; align-items: center; gap: 4px; }
.doc svg { width: 11px; height: 11px; }
.doc .x { border-radius: 2px; background: #b5b5b5; color: #fff; }
.doc .x svg { width: 9px; height: 9px; }
.doc.open .x { background: #cf7163; }

.status {
  display: flex;
  align-items: center;
  justify-content: space-between;
  height: 20px;
  padding: 2px 2px 0 0;
}
.msg { width: 83px; height: 18px; border-right: 1px solid #dcdcdc; }

.view3d .solid { --light: #979797; --dark: #3e3e3e; --top: #5c5c5c; --line: #0c0c0c; }
.view3d .mesh { --light: #b2b2b2; --dark: #494949; --top: #717171; --line: none; }
.m-light { fill: var(--light); }
.m-dark { fill: var(--dark); }
.m-top { fill: var(--top); }
.m-line { stroke: var(--line); stroke-width: 3px; }
path.m-line:not(.m-dark):not(.m-top) { fill: none; }
```
